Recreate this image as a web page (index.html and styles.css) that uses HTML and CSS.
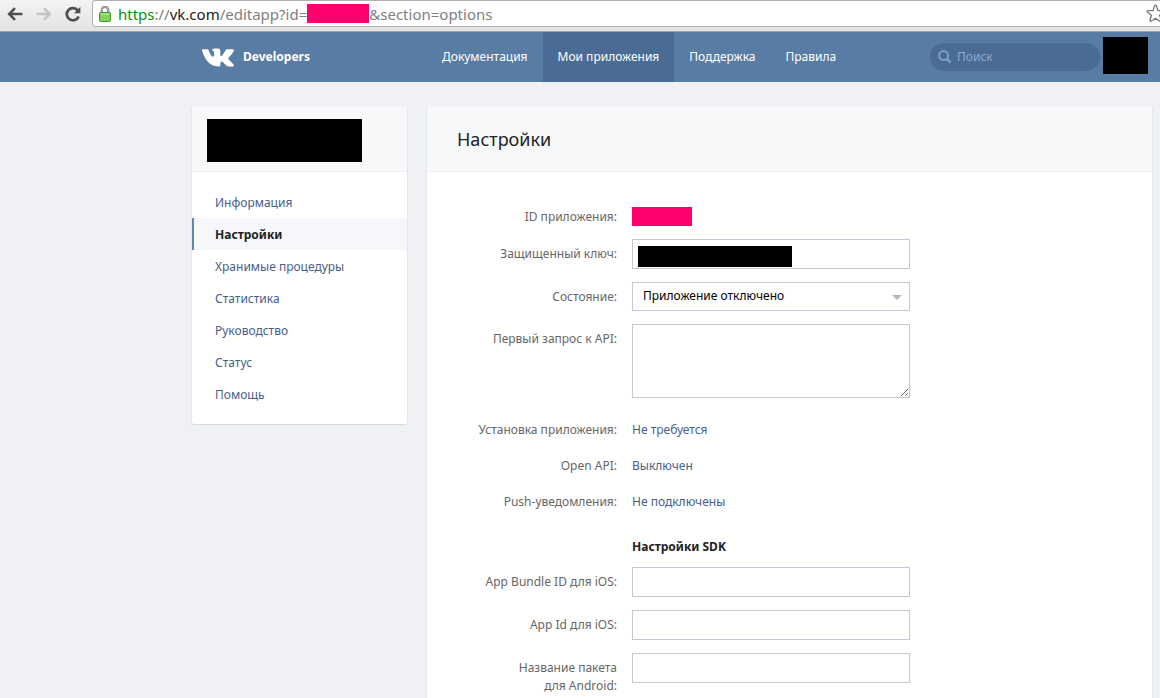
FILE: index.html
```html
<!DOCTYPE html>
<html lang="ru">
<head>
<meta charset="utf-8">
<title>Настройки</title>
<link rel="stylesheet" href="styles.css">
</head>
<body>
<div class="toolbar">
  <div class="toolbar-buttons">
    <button class="tool" type="button" aria-label="Назад">
      <svg width="16" height="14" viewBox="0 0 16 14" fill="none" stroke="#505050" stroke-width="2.6"><path d="M15.5 7H2.5M8 1.2L2.2 7L8 12.8"/></svg>
    </button>
    <button class="tool" type="button" aria-label="Вперёд">
      <svg width="16" height="14" viewBox="0 0 16 14" fill="none" stroke="#c4c4c4" stroke-width="2.6"><path d="M.5 7H13.5M8 1.2L13.8 7L8 12.8"/></svg>
    </button>
    <button class="tool" type="button" aria-label="Обновить">
      <svg width="16" height="16" viewBox="0 0 16 16"><path d="M12.8 4.6A6.1 6.1 0 1 0 13.6 10.4" fill="none" stroke="#505050" stroke-width="2.8"/><path d="M15.4 .8V7.2H9Z" fill="#505050"/></svg>
    </button>
  </div>
  <div class="address">
    <svg class="lock" width="12" height="16" viewBox="0 0 12 16"><path d="M2.7 8V4.2a3.3 3.3 0 0 1 6.6 0V8" fill="none" stroke="#777" stroke-width="2.2"/><path d="M2.7 8V4.2a3.3 3.3 0 0 1 6.6 0V8" fill="none" stroke="#ccc" stroke-width=".8"/><rect x=".5" y="6.5" width="11" height="9" rx="1" fill="#86d05e" stroke="#3f9136"/><path d="M1.5 8H10.5" stroke="#c3efa9"/></svg>
    <span class="url"><span class="scheme">https</span>://<span class="host">vk.com</span>/editapp?id=</span><span class="url-mask"></span><span class="url">&amp;section=options</span>
    <svg class="star" width="19" height="19" viewBox="0 0 19 19"><path d="M9.5 1.2Q10.2 1.2 10.6 2.2L12 6.6L17 6.7Q18.4 7 17.4 8.2L13.6 11.2L15 16.2Q15 17.6 13.7 17.2L9.5 14.3L5.3 17.2Q4 17.6 4 16.2L5.4 11.2L1.6 8.2Q.6 7 2 6.7L7 6.6L8.4 2.2Q8.8 1.2 9.5 1.2Z" fill="#fff" stroke="#777" stroke-width="1.3"/></svg>
  </div>
</div>
<header class="header">
  <a class="brand" href="#">
    <svg width="33" height="19" viewBox="0 0 33 19" fill="#fff"><path d="M.6 1.3H5.2Q6.3 1.3 6.7 2.4C8.1 5.8 9.8 8.8 11.2 8.8C12.5 8.8 12.3 3.3 11 2.6L9.7 1.9C10.5.8 12 .4 14 .4C17.7.4 18.3.9 18.3 3.1V7.1C18.3 8.5 19.1 8.6 20 7.6C21.4 6 22.7 3.9 23.6 2Q24 1.3 25 1.3H30.4C31.8 1.3 32.1 2 31.7 3C30.9 5 28.7 7.6 26.8 9.6C26 10.4 26.1 10.9 26.9 11.7C28.6 13.3 31 15.5 31.8 17.1C32.2 18 31.7 18.4 30.6 18.4H26.2C24.1 18.4 22.5 15.6 20.7 14.1C19.3 13 18.4 13.6 18.4 15.1V16.7C18.4 18 17.9 18.5 16.5 18.5C7.7 18.5 2.6 11.3.2 3.1C-.1 2 0 1.4.6 1.3Z"/></svg>
    <span>Developers</span>
  </a>
  <nav class="nav">
    <a href="#">Документация</a>
    <a class="active" href="#">Мои приложения</a>
    <a href="#">Поддержка</a>
    <a href="#">Правила</a>
  </nav>
  <label class="search">
    <svg width="14" height="14" viewBox="0 0 14 14" fill="none" stroke="#7f9fc1" stroke-width="2"><circle cx="5.6" cy="5.6" r="4.5"/><path d="M8.8 8.8L12.6 12.6" stroke-width="2.6"/></svg>
    <input type="search" placeholder="Поиск" aria-label="Поиск">
  </label>
  <div class="profile-mask"></div>
</header>
<div class="page">
  <aside class="card">
    <div class="card-head side-head"><div class="app-mask"></div></div>
    <nav class="menu">
      <a href="#">Информация</a>
      <a class="current" href="#">Настройки</a>
      <a href="#">Хранимые процедуры</a>
      <a href="#">Статистика</a>
      <a href="#">Руководство</a>
      <a href="#">Статус</a>
      <a href="#">Помощь</a>
    </nav>
  </aside>
  <main class="card">
    <div class="card-head"><h1>Настройки</h1></div>
    <form class="form">
      <div class="row"><span class="label">ID приложения:</span><div class="field"><div class="id-mask"></div></div></div>
      <div class="row boxed"><label class="label" for="key">Защищенный ключ:</label><div class="field"><input class="box" id="key" type="text"><span class="key-mask"></span></div></div>
      <div class="row boxed"><label class="label" for="state">Состояние:</label><div class="field"><select class="box" id="state"><option>Приложение отключено</option></select><svg class="caret" width="10" height="5" viewBox="0 0 10 5"><path d="M0 0H10L5 5Z" fill="#b4b8bd"/></svg></div></div>
      <div class="row boxed"><label class="label" for="request">Первый запрос к API:</label><div class="field"><textarea class="box" id="request"></textarea></div></div>
      <div class="row-group">
        <div class="row"><span class="label">Установка приложения:</span><div class="field"><a href="#">Не требуется</a></div></div>
        <div class="row"><span class="label">Open API:</span><div class="field"><a href="#">Выключен</a></div></div>
        <div class="row"><span class="label">Push-уведомления:</span><div class="field"><a href="#">Не подключены</a></div></div>
      </div>
      <div class="row section"><span class="label"></span><h2 class="field">Настройки SDK</h2></div>
      <div class="row boxed"><label class="label" for="bundle">App Bundle ID для iOS:</label><div class="field"><input class="box" id="bundle" type="text"></div></div>
      <div class="row boxed"><label class="label" for="ios">App Id для iOS:</label><div class="field"><input class="box" id="ios" type="text"></div></div>
      <div class="row boxed"><label class="label" for="android">Название пакета<br>для Android:</label><div class="field"><input class="box" id="android" type="text"></div></div>
    </form>
  </main>
</div>
</body>
</html>
```
FILE: styles.css
```css
* { box-sizing: border-box; }
html { overflow: hidden; }
body {
  margin: 0;
  background: #eff1f5;
  color: #222;
  font: 12px/18px "Noto Sans", sans-serif;
}
a { color: #45608a; text-decoration: none; }
input, select, textarea, button { font: inherit; }

.toolbar {
  display: flex;
  height: 32px;
  padding-bottom: 4px;
  background: linear-gradient(#f4f4f4, #e2e2e2);
  border-bottom: 1px solid #a0a0a0;
  overflow: hidden;
}
.toolbar-buttons { display: flex; flex: none; width: 92px; gap: 13px; padding-left: 7px; align-items: center; }
.tool { display: flex; padding: 0; border: 0; background: none; }
.address {
  display: flex;
  flex: 1;
  align-items: center;
  padding-left: 6px;
  margin-right: -8px;
  background: #fff;
  border: 1px solid #b0b0b0;
  border-radius: 3px;
  font: 15px/20px "Noto Sans", sans-serif;
  color: #808080;
}
.lock { margin-right: 7px; }
.scheme { color: #0b8f0b; }
.host { color: #222; }
.url-mask { width: 62px; height: 19px; background: #ff006e; }
.star { margin-left: auto; margin-right: 2px; }

.header {
  display: flex;
  height: 50px;
  padding: 0 12px 0 202px;
  background: #587ca3;
}
.brand {
  display: flex;
  flex: none;
  width: 225px;
  gap: 8px;
  align-items: center;
  color: #fff;
  font-weight: bold;
}
.nav { display: flex; }
.nav a { padding: 16px 15px; color: #fff; }
.nav .active { background: #4a6c94; }
.search {
  display: flex;
  width: 170px;
  height: 28px;
  margin: 11px 3px 0 auto;
  padding: 0 8px;
  gap: 5px;
  align-items: center;
  border-radius: 14px;
  background: #4a6c94;
}
.search input { flex: 1; min-width: 0; padding: 0; border: 0; outline: 0; background: none; color: #fff; }
.search input::placeholder { color: #8caaca; }
.profile-mask { width: 45px; height: 37px; margin-top: 5px; background: #000; }

.page {
  display: grid;
  grid-template-columns: 215px 1fr;
  gap: 20px;
  align-items: start;
  padding: 25px 8px 0 192px;
}
.card {
  background: #fff;
  border-radius: 2px;
  box-shadow: 0 1px 1px #d5d9e0, 1px 0 #e5e8ed, -1px 0 #e5e8ed;
}
.card-head {
  display: flex;
  height: 65px;
  padding: 0 30px;
  align-items: center;
  background: #f7f8fa;
  border-bottom: 1px solid #edeff1;
}
.side-head { padding: 2px 15px 0; }
.app-mask { width: 155px; height: 43px; background: #000; }
.menu { display: flex; flex-direction: column; padding: 14px 0; }
.menu a { padding: 8px 23px 6px; }
.menu .current {
  padding-left: 21px;
  border-left: 2px solid #6287ae;
  background: #f5f7fa;
  color: #222;
  font-weight: bold;
}
h1 { margin: 0; font-size: 18px; line-height: 24px; font-weight: normal; }
h2 { margin: 0; font-size: 12px; line-height: 18px; }

.form { display: flex; flex-direction: column; gap: 13px; padding: 35px 30px; }
.row { display: flex; gap: 15px; }
.label { flex: none; width: 160px; color: #666; text-align: right; }
.row:first-child > .label { line-height: 20px; margin-bottom: -1px; }
.boxed .label { padding-top: 6px; }
.field { position: relative; width: 278px; }
.row-group { display: flex; flex-direction: column; gap: 18px; padding: 10px 0 14px; }
.row-group .row > .label { line-height: 18px; margin: 0; }
.section { margin-bottom: -2px; }
.box {
  display: block;
  width: 100%;
  height: 30px;
  padding: 4px 10px;
  border: 1px solid #c0c9d6;
  border-radius: 0;
  background: #fff;
  color: #000;
}
select.box { height: 29px; padding: 3px 10px 5px; appearance: none; }
textarea.box { height: 74px; }
.caret { position: absolute; right: 8px; top: 13px; }
.id-mask { width: 60px; height: 19px; background: #ff006e; }
.key-mask { position: absolute; left: 6px; top: 7px; width: 154px; height: 21px; background: #000; }
```
